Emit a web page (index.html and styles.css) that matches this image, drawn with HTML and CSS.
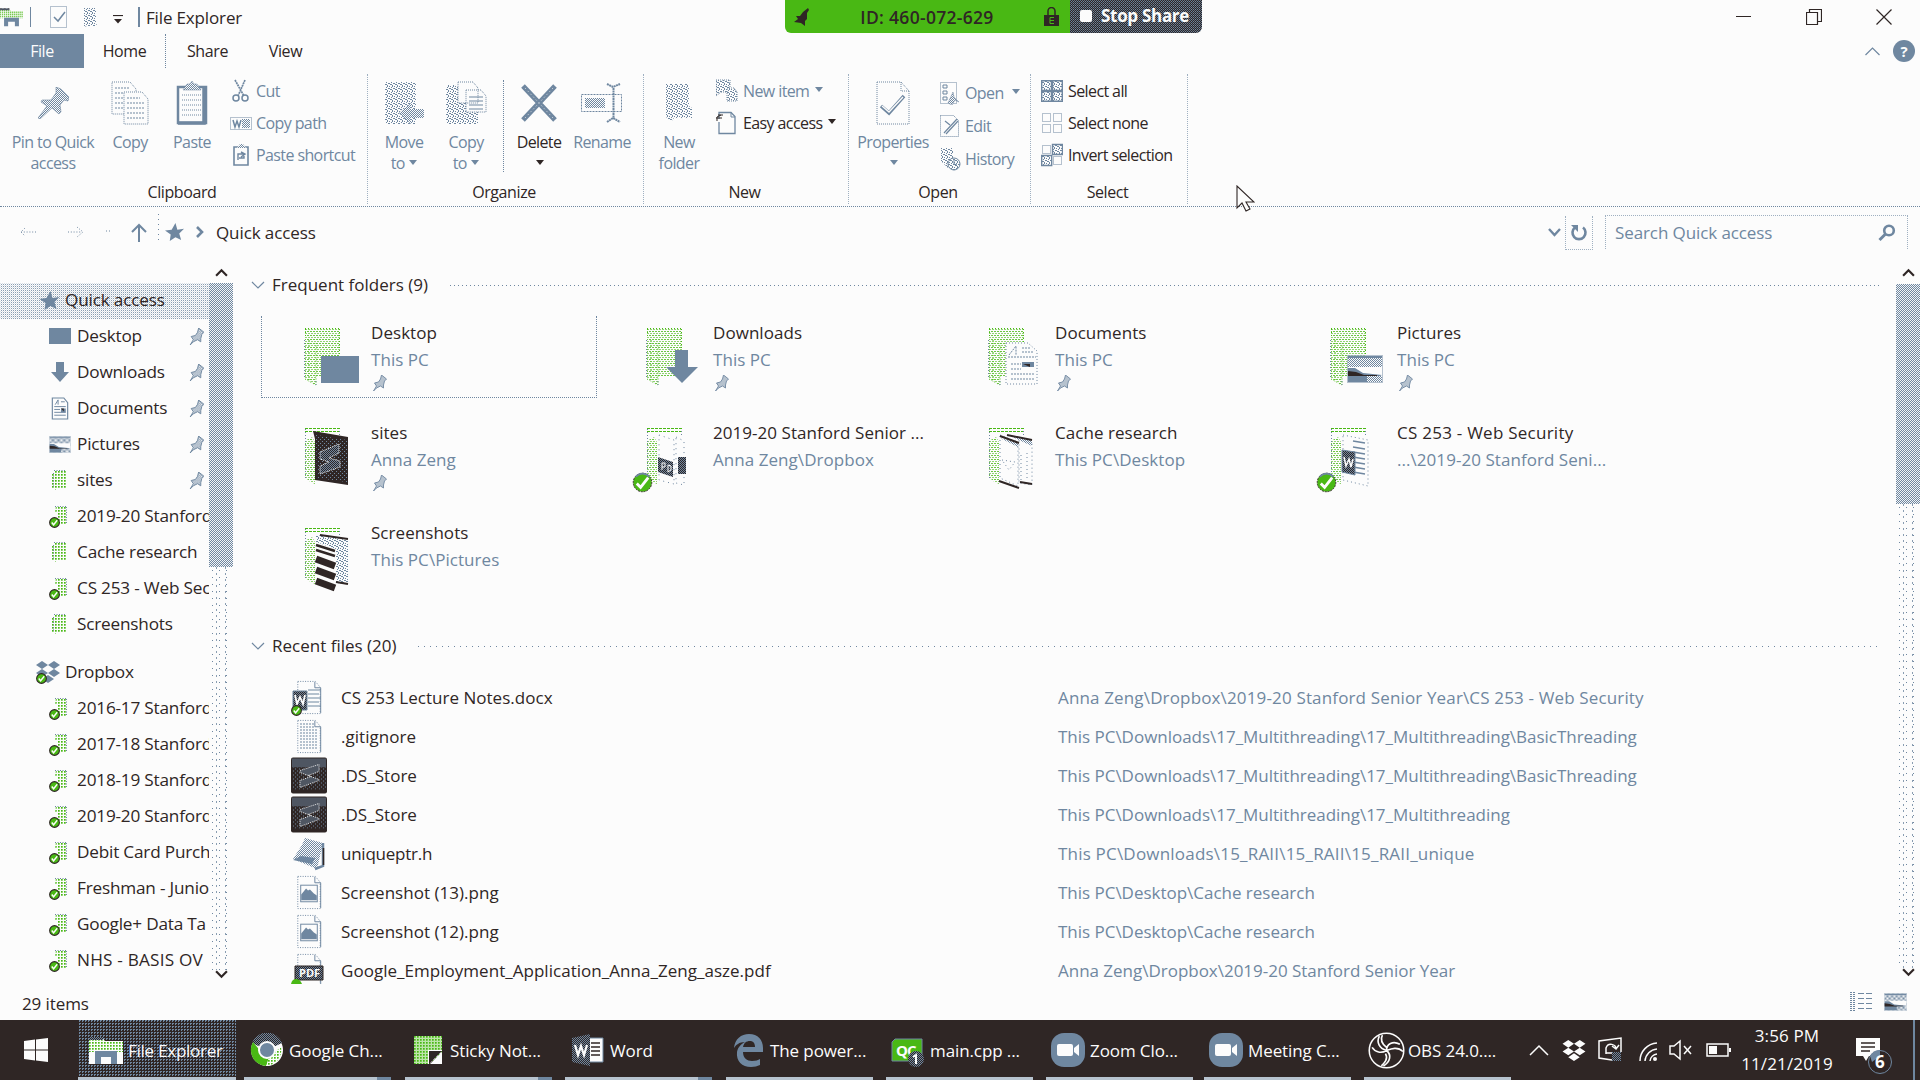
FILE: index.html
```html
<!DOCTYPE html>
<html lang="en">
<head>
<meta charset="utf-8">
<title>File Explorer</title>
<link rel="stylesheet" href="styles.css">
</head>
<body>
<svg class="defs" width="0" height="0" aria-hidden="true">
  <defs>
    <pattern id="green" width="3" height="3" patternUnits="userSpaceOnUse"><rect width="3" height="3" fill="#fcfcfc"/><rect width="1.7" height="1.7" fill="#49b814"/></pattern>
    <pattern id="gg" width="3" height="4" patternUnits="userSpaceOnUse"><rect width="3" height="4" fill="#fcfcfc"/><rect width="2" height="1" fill="#49b814" opacity=".8"/><rect x="1" y="2" width="2" height="1" fill="#49b814" opacity=".6"/></pattern>
    <pattern id="blue" width="2" height="2" patternUnits="userSpaceOnUse"><rect width="2" height="2" fill="#fcfcfc"/><rect width="1" height="1" fill="#6f87a0"/><rect x="1" y="1" width="1" height="1" fill="#6f87a0"/></pattern>
    <pattern id="soft" width="5" height="5" patternUnits="userSpaceOnUse"><rect width="5" height="5" fill="#fcfcfc"/><path d="M0 0h1v1H0zM2 1h1v1H2zM4 2h1v1H4zM1 3h1v1H1zM3 4h1v1H3zM3 0h1v1H3zM0 2h1v1H0zM2 3h1v1H2z" fill="#6f87a0"/></pattern>
    <pattern id="dark" width="4" height="4" patternUnits="userSpaceOnUse"><rect width="4" height="4" fill="#2f2625"/><rect width="1" height="1" fill="#6f87a0"/><rect x="2" y="2" width="1" height="1" fill="#6f87a0"/></pattern>
    <pattern id="slate" width="2" height="2" patternUnits="userSpaceOnUse"><rect width="2" height="2" fill="#2f2625"/><rect width="1" height="1" fill="#6f87a0"/><rect x="1" y="1" width="1" height="1" fill="#6f87a0"/></pattern>
  </defs>
  <symbol id="pin" viewBox="0 0 14 16"><path d="M9 0l5 4-2 2-1 4 0 3-3-2-4 2-3 3 3-5-2-3 4-1 2-3z" fill="url(#blue)" stroke="#6f87a0" stroke-width=".9"/></symbol>
  <symbol id="star" viewBox="0 0 20 20"><path d="M11 0l2 7 7-1-5 5 2 7-6-3-6 4 1-7-6-4 7-1z" fill="#6f87a0"/></symbol>
  <symbol id="badge" viewBox="0 0 12 12"><circle cx="6" cy="6" r="5.3" fill="#49b814" stroke="#2f2625" stroke-width="1.2"/><path d="M3 6l2 2.5 4-5" fill="none" stroke="#fcfcfc" stroke-width="1.5"/></symbol>
  <symbol id="fold" viewBox="0 0 22 26"><path d="M5 2h12v15h1v3H8l-2 2-1-2-2 0V6l2-1z" fill="url(#green)"/><path d="M5 2.5h12M4.5 5v15" stroke="#6f87a0" stroke-dasharray="1 1.5" fill="none"/></symbol>
  <symbol id="foldb" viewBox="0 0 22 26"><path d="M7 2h11v18H8V9H6z" fill="url(#green)"/><path d="M6 2.5h11M17.500 3v17" stroke="#6f87a0" stroke-dasharray="1 1.5" fill="none"/><use href="#badge" x="0" y="13" width="11" height="11"/></symbol>
  <symbol id="bigfold" viewBox="0 0 60 70"><path d="M4 5h35v49H15v8l-7-4-4-3V19z" fill="url(#gg)"/><path d="M4 5.500h35M38.500 6v47M4.500 6v9M8 17v40M4 20v36l11 6V20" fill="none" stroke="#49b814" stroke-dasharray="1 2"/><path d="M3.500 17v38M15 58v4" stroke="#6f87a0" stroke-dasharray="1 2"/></symbol>
  <symbol id="openfold" viewBox="0 0 60 70"><path d="M4 5.500h35M4 8.500h35" stroke="#49b814" stroke-dasharray="3 1"/><path d="M4 18l7-4 3 5v42l-6-3-4-4z" fill="url(#gg)"/><path d="M4.500 6v50M38.500 8v6" stroke="#6f87a0" stroke-dasharray="1 2"/></symbol>
  <symbol id="bigbadge" viewBox="0 0 22 22"><circle cx="11" cy="11" r="9.700" fill="#49b814" stroke="#2f2625" stroke-dasharray="2 1"/><path d="M4 5a9 9 0 0 1 14 0" fill="none" stroke="#6f87a0" stroke-width="2"/><path d="M5 12l4 4 8-10" fill="none" stroke="#fcfcfc" stroke-width="3"/></symbol>
  <symbol id="photo" viewBox="0 0 36 28"><rect x=".5" y=".5" width="35" height="27" fill="#fcfcfc" stroke="#6f87a0" stroke-dasharray="1 1"/><path d="M1 3h34v9H1z" fill="url(#blue)"/><path d="M1 2h34" stroke="#6f87a0" stroke-width="2"/><path d="M1 13h7l8 5 19 2-14 7H1z" fill="#6f87a0"/><path d="M1 16l8 1 8 3H30v1H1z" fill="#2f2625"/><path d="M20 21h15v6H20z" fill="url(#blue)"/></symbol>
  <symbol id="doc" viewBox="0 0 18 24"><path d="M1 1h12l4 5v17H1z" fill="#fcfcfc" stroke="#6f87a0" stroke-width="1.200"/><path d="M4 8l3-5v5M3 10h12M3 13h6M3 16h12M3 19h12M10 5h4" fill="none" stroke="#6f87a0"/><path d="M10 12h5v4h-5z" fill="#6f87a0"/><path d="M10 12h3v3z" fill="#2f2625"/></symbol>
  <symbol id="drop" viewBox="0 0 24 22"><path d="M6 0l6 4-6 4-6-4zM18 0l6 4-6 4-6-4zM6 8l6 4-6 4-6-4zM18 8l6 4-6 4-6-4zM12 14l6 4-6 4-6-4z"/></symbol>
  <symbol id="sheet" viewBox="0 0 36 40"><path d="M6.500 3.500h18l5 6v27h-23z" fill="#fcfcfc" stroke="#6f87a0" stroke-dasharray="1 1.500"/><path d="M24 4v6h6v26" fill="none" stroke="#6f87a0"/></symbol>
  <symbol id="image" viewBox="0 0 36 40"><use href="#sheet"/><rect x="9.500" y="12.500" width="17" height="17" fill="none" stroke="#6f87a0"/><path d="M10 27v-5l5-6 2 2 2-1 4 4 3 2v5H10z" fill="#6f87a0"/></symbol>
  <symbol id="subl" viewBox="0 0 36 38"><rect y="1" width="36" height="36" rx="2" fill="#2f2625"/><path d="M1 2h34v9H1z" fill="url(#slate)"/><path d="M1 11h34v22H1z" fill="url(#dark)"/><path d="M28 8v7l-11 4 11 4v1L9 31v-7l11-4-11-4v-2z" fill="url(#slate)" stroke="#fcfcfc" stroke-width=".9" stroke-dasharray="1 1"/></symbol>
  <symbol id="pages" viewBox="0 0 38 44"><path d="M1 1h18l6 7v25H1z" fill="#fcfcfc" stroke="#6f87a0" stroke-dasharray="1 1"/><path d="M4 7h15M4 12h15M4 17h10M4 22h10M4 27h10" stroke="#6f87a0" stroke-dasharray="2 1"/><path d="M13 11h18l6 7v25H13z" fill="#fcfcfc" stroke="#6f87a0" stroke-dasharray="1 1"/><path d="M16 17h13M16 22h18M16 27h18M16 32h18M16 37h18" stroke="#6f87a0" stroke-dasharray="2 1"/></symbol>
  <symbol id="zoom" viewBox="0 0 34 34"><rect width="34" height="34" rx="13" fill="#6f87a0"/><rect x="6" y="11" width="16" height="12" rx="2" fill="#fcfcfc"/><path d="M23 15l5-4v12l-5-4z" fill="#fcfcfc"/></symbol>
  <symbol id="explorer" viewBox="0 0 34 28"><path d="M0 2h13l3 3h18v23H0z" fill="#fcfcfc"/><path d="M0 2h13l3 3h18v11H0z" fill="url(#green)"/><path d="M6 28V15h22v13h-6v-7H12v7z" fill="#6f87a0"/><path d="M0 1h14v3H0z" fill="url(#slate)"/></symbol>
</svg>

<header class="titlebar">
  <svg class="ti-app" viewBox="0 0 34 28"><use href="#explorer"/></svg>
  <i class="bar a"></i>
  <svg class="ti-check" viewBox="0 0 18 22"><rect x=".5" y=".5" width="16" height="21" fill="none" stroke="#6f87a0" stroke-dasharray="1 1"/><path d="M4 11l4 4 7-9" fill="none" stroke="#6f87a0" stroke-width="1.500"/></svg>
  <svg class="ti-new" viewBox="0 0 13 19"><path d="M0 0h12v14l1 4H3l-3 1z" fill="url(#soft)"/></svg>
  <svg class="ti-caret" viewBox="0 0 10 9"><path d="M0 .5h10" stroke="#2f2625" stroke-width="1.200"/><path d="M1 4h8L5 8.500z" fill="#2f2625"/></svg>
  <i class="bar b"></i>
  <span class="app-name">File Explorer</span>
  <div class="winbtns">
    <svg width="16" height="16" viewBox="0 0 16 16"><path d="M0 7.500h15" stroke="#2f2625"/></svg>
    <svg width="16" height="16" viewBox="0 0 16 16"><path d="M.5 3.500h11v12H.5zM3.500 3V.5h12v12H12" fill="none" stroke="#2f2625" stroke-width="1.200"/></svg>
    <svg width="16" height="16" viewBox="0 0 16 16"><path d="M.5.5l15 15M15.500.5l-15 15" stroke="#2f2625" stroke-width="1.200"/></svg>
  </div>
</header>

<nav class="tabs">
  <span class="file">File</span><span class="home">Home</span><span class="share">Share</span><span class="view">View</span>
  <div class="tab-tools">
    <svg width="15" height="9" viewBox="0 0 15 9"><path d="M.5 8l7-7 7 7" fill="none" stroke="#6f87a0" stroke-width="1.200"/></svg>
    <b class="help">?</b>
  </div>
</nav>

<section class="ribbon">
  <div class="group g-clip">
    <div class="tools">
      <div class="big w106"><svg class="pin-big" viewBox="0 0 31 32"><path d="M18 0l5 2 8 8-1 4-4-1-4 5 1 7-2 2-7-6L2 32 0 31l9-12-6-4 1-2 9 0 5-7z" fill="url(#blue)" stroke="#6f87a0" stroke-width=".6"/></svg><span>Pin to Quick<br>access</span></div>
      <div class="big w48"><svg width="38" height="44"><use href="#pages"/></svg><span>Copy</span></div>
      <div class="big w76"><svg width="32" height="44" viewBox="0 0 32 44"><path d="M2 6h28v36H2z" fill="#fcfcfc" stroke="#6f87a0" stroke-width="2.500"/><path d="M28 7v35H2" fill="none" stroke="#6f87a0" stroke-width="3.500"/><path d="M7 9l4-6h3l2-3 2 3h3l4 6z" fill="url(#blue)" stroke="#6f87a0" stroke-width=".5"/><path d="M6 14h19M6 19h19M6 24h19M6 29h19M6 34h19" stroke="#6f87a0" stroke-dasharray="1 1"/></svg><span>Paste</span></div>
      <div class="small">
        <div><svg viewBox="0 0 22 24"><path d="M5 1l9 16M15 1L8 17" stroke="#6f87a0" stroke-width="1.700" stroke-dasharray="2 .6" fill="none"/><circle cx="6" cy="19" r="3" fill="none" stroke="#6f87a0" stroke-width="1.500"/><circle cx="15" cy="19" r="3" fill="none" stroke="#6f87a0" stroke-width="1.500"/></svg>Cut</div>
        <div><svg viewBox="0 0 22 24"><rect x=".5" y="6.500" width="21" height="12" fill="none" stroke="#6f87a0" stroke-dasharray="1 1"/><path d="M3 9l2 7 2-6 2 6 2-7" stroke="#6f87a0" fill="none" stroke-width="1.500"/><path d="M12 8h8v9h-8z" fill="url(#blue)"/></svg>Copy path</div>
        <div><svg viewBox="0 0 22 24"><path d="M4 4h14v18H4z" fill="none" stroke="#6f87a0" stroke-width="1.600"/><path d="M7 5l3-4h3l3 4z" fill="url(#blue)"/><path d="M8 17v-6h6v4H9m2-6l4 2-4 3" stroke="#6f87a0" fill="none" stroke-width="1.400"/></svg>Paste shortcut</div>
      </div>
    </div>
    <div class="label">Clipboard</div>
  </div>
  <div class="group g-org">
    <div class="tools">
      <div class="big w72"><svg width="40" height="44" viewBox="0 0 40 44"><path d="M1 1h31v42H1z" fill="url(#soft)"/><path d="M15 32l12-10v6h13v9H27v6z" fill="url(#blue)"/></svg><span>Move<br>to <i class="car"></i></span></div>
      <div class="big w52"><svg width="42" height="44" viewBox="0 0 42 44"><path d="M1 4h32v39H1z" fill="url(#soft)"/><path d="M13 1h15l5 6v15H13zM21 9h15l5 6v16H21z" fill="#fcfcfc" stroke="#6f87a0" stroke-dasharray="1 1"/><path d="M24 16h14M24 20h14M24 24h14M24 28h14" stroke="#6f87a0"/></svg><span>Copy<br>to <i class="car"></i></span></div>
      <i class="inner-sep"></i>
      <div class="big w70 on"><svg width="38" height="44" viewBox="0 0 38 44"><path d="M3 5l32 34M35 5L3 39" stroke="#6f87a0" stroke-width="5"/><path d="M5 7l28 30M33 7L5 37" stroke="#fcfcfc" stroke-width=".8" stroke-dasharray="1 3"/></svg><span>Delete<br><i class="car"></i></span></div>
      <div class="big w56"><svg width="44" height="44" viewBox="0 0 44 44"><rect x="1.500" y="13.500" width="40" height="17" fill="none" stroke="#6f87a0" stroke-dasharray="2 1"/><path d="M5 17h20v10H5z" fill="url(#blue)"/><path d="M33.500 7v31M27 3l6 3 7-3M27 41l6-4 7 4" fill="none" stroke="#6f87a0" stroke-width="2" stroke-dasharray="2 .5"/></svg><span>Rename</span></div>
    </div>
    <div class="label">Organize</div>
  </div>
  <div class="group g-new">
    <div class="tools">
      <div class="big w70"><svg width="30" height="44" viewBox="0 0 30 44"><path d="M2 3h23v22l3 2v10H10l-3 4-5-5z" fill="url(#soft)"/></svg><span>New<br>folder</span></div>
      <div class="small n">
        <div><svg viewBox="0 0 22 24"><path d="M0 1h14v12H5l-5 4z" fill="url(#soft)" stroke="#6f87a0" stroke-dasharray="1 1"/><path d="M11 9h7l3 4v9H11z" fill="url(#soft)" stroke="#6f87a0" stroke-dasharray="1 1"/></svg>New item <i class="car"></i></div>
        <div class="on"><svg viewBox="0 0 22 24"><path d="M3 8V1.500h12l4 4v17H3V11" fill="none" stroke="#6f87a0" stroke-width="1.300"/><path d="M15 1v5h4" fill="none" stroke="#6f87a0"/><path d="M0 7h6M1 10V6l4-2M2 4h5" stroke="#2f2625" fill="none"/></svg>Easy access <i class="car"></i></div>
      </div>
    </div>
    <div class="label">New</div>
  </div>
  <div class="group g-open">
    <div class="tools">
      <div class="big w88"><svg width="34" height="44" viewBox="0 0 34 44"><path d="M1 1h24l8 9v33H1z" fill="none" stroke="#6f87a0" stroke-dasharray="1 1"/><path d="M25 1v9h8" fill="none" stroke="#6f87a0" stroke-dasharray="1 1"/><path d="M5 25l8 7 15-17" fill="none" stroke="#6f87a0" stroke-width="3.500"/><path d="M6 25l7 6 14-15" fill="none" stroke="#fcfcfc" stroke-width="1.300"/></svg><span>Properties<br><i class="car"></i></span></div>
      <div class="small o">
        <div><svg viewBox="0 0 22 24"><rect x="1.500" y="1.500" width="16" height="21" fill="none" stroke="#6f87a0" stroke-dasharray="1 1"/><path d="M4 4h4v3H4zM4 10h4v3H4zM4 16h4v3H4z" fill="none" stroke="#6f87a0"/><path d="M9 22l5-11 1 5 5 5-4-2-3 5z" fill="url(#blue)" stroke="#6f87a0" stroke-width=".5"/></svg>Open <i class="car m8"></i></div>
        <div><svg viewBox="0 0 22 24"><path d="M1.500 1.500h13l5 5v16h-18z" fill="none" stroke="#6f87a0" stroke-dasharray="1 1"/><path d="M5 19L18 5M7 20L19 7M6 7l5 4" stroke="#6f87a0" stroke-width="1.200"/></svg>Edit</div>
        <div><svg viewBox="0 0 22 24"><path d="M2 1h12v20H9L2 14z" fill="url(#soft)"/><circle cx="15" cy="17" r="6" fill="url(#soft)" stroke="#6f87a0"/><path d="M15 13v4l3 1" stroke="#6f87a0" fill="none"/></svg>History</div>
      </div>
    </div>
    <div class="label">Open</div>
  </div>
  <div class="group g-sel">
    <div class="tools">
      <div class="small s on">
        <div><svg viewBox="0 0 22 24"><path d="M.7 1.700h20.600v20.600H.7z" fill="url(#soft)" stroke="#6f87a0" stroke-width="1.400"/><path d="M11 1v22M0 12h22" stroke="#6f87a0" stroke-width="2.500"/></svg>Select all</div>
        <div><svg viewBox="0 0 22 24"><path d="M1.500 2.500h8v8h-8zM12.500 2.500h8v8h-8zM1.500 13.500h8v8h-8zM12.500 13.500h8v8h-8z" fill="none" stroke="#6f87a0" stroke-dasharray="1 1"/></svg>Select none</div>
        <div><svg viewBox="0 0 22 24"><path d="M1.500 2.500h8v8h-8zM12.500 13.500h8v8h-8z" fill="none" stroke="#6f87a0" stroke-dasharray="1 1"/><path d="M11.500 1.500h10v10h-10zM.7 12.500h10v10H.7z" fill="url(#soft)" stroke="#6f87a0" stroke-width="1.400"/></svg>Invert selection</div>
      </div>
    </div>
    <div class="label">Select</div>
  </div>
</section>

<section class="address">
  <svg class="nav-arrows" viewBox="0 0 210 40"><path d="M21 20h15M25 16l-4 4 4 4M68 20h14M77 15l6 5-6 5" fill="none" stroke="#6f87a0" stroke-dasharray="1 1.800"/><path d="M106 19h4" stroke="#6f87a0" stroke-dasharray="1 2"/><path d="M139 30V13M132 20l7-7 7 7" fill="none" stroke="#6f87a0" stroke-width="2"/><path d="M158.500 2v30" stroke="#6f87a0" stroke-dasharray="1 4"/><use href="#star" x="165" y="11" width="19" height="19"/><path d="M197 15l5 5-5 5" fill="none" stroke="#6f87a0" stroke-width="2.600"/></svg>
  <span class="crumb">Quick access</span>
  <svg class="addr-caret" width="13" height="9" viewBox="0 0 13 9"><path d="M1 1l5.500 6L12 1" fill="none" stroke="#6f87a0" stroke-width="2.400"/></svg>
  <div class="refresh"><svg width="18" height="18" viewBox="0 0 18 18"><path d="M13 3.500A6.500 6.500 0 1 1 5 3.500" fill="none" stroke="#6f87a0" stroke-width="2.600"/><path d="M1 1h7v7z" fill="#6f87a0"/></svg></div>
  <div class="search"><span>Search Quick access</span><svg width="18" height="18" viewBox="0 0 18 18"><circle cx="11" cy="6.500" r="4.800" fill="none" stroke="#6f87a0" stroke-width="2.600"/><path d="M7.500 10L1.500 16" stroke="#6f87a0" stroke-width="3"/></svg></div>
</section>

<main class="body">
  <aside class="side">
    <div class="tree">
      <div class="row root sel"><svg class="ic"><use href="#star" x="3" y="3" width="21" height="20"/></svg><span>Quick access</span></div>
      <div class="row"><svg class="ic"><rect y="4" width="22" height="16" fill="#6f87a0"/></svg><span>Desktop</span><svg class="pin"><use href="#pin"/></svg></div>
      <div class="row"><svg class="ic"><path d="M7 2h8v10h5l-9 10-9-10h5z" fill="#6f87a0"/></svg><span>Downloads</span><svg class="pin"><use href="#pin"/></svg></div>
      <div class="row"><svg class="ic"><use href="#doc" x="2" y="1" width="18" height="23"/></svg><span>Documents</span><svg class="pin"><use href="#pin"/></svg></div>
      <div class="row"><svg class="ic"><use href="#photo" x="0" y="4" width="22" height="17"/></svg><span>Pictures</span><svg class="pin"><use href="#pin"/></svg></div>
      <div class="row"><svg class="ic"><use href="#fold"/></svg><span>sites</span><svg class="pin"><use href="#pin"/></svg></div>
      <div class="row"><svg class="ic"><use href="#foldb"/></svg><span>2019-20 Stanford</span></div>
      <div class="row"><svg class="ic"><use href="#fold"/></svg><span>Cache research</span></div>
      <div class="row"><svg class="ic"><use href="#foldb"/></svg><span>CS 253 - Web Sec</span></div>
      <div class="row"><svg class="ic"><use href="#fold"/></svg><span>Screenshots</span></div>
      <div class="row root gap"><svg class="ic" fill="#6f87a0"><use href="#drop" x="0" y="1" width="24" height="22"/><use href="#badge" x="0" y="13" width="11" height="11"/></svg><span>Dropbox</span></div>
      <div class="row"><svg class="ic"><use href="#foldb"/></svg><span>2016-17 Stanford</span></div>
      <div class="row"><svg class="ic"><use href="#foldb"/></svg><span>2017-18 Stanford</span></div>
      <div class="row"><svg class="ic"><use href="#foldb"/></svg><span>2018-19 Stanford</span></div>
      <div class="row"><svg class="ic"><use href="#foldb"/></svg><span>2019-20 Stanford</span></div>
      <div class="row"><svg class="ic"><use href="#foldb"/></svg><span>Debit Card Purch</span></div>
      <div class="row"><svg class="ic"><use href="#foldb"/></svg><span>Freshman - Junio</span></div>
      <div class="row"><svg class="ic"><use href="#foldb"/></svg><span>Google+ Data Ta</span></div>
      <div class="row"><svg class="ic"><use href="#foldb"/></svg><span class="sp">NHS - BASIS OV</span></div>
    </div>
    <div class="scroll left">
      <svg class="arr" viewBox="0 0 12 8"><path d="M1 7l5-5 5 5" fill="none" stroke="#2f2625" stroke-width="2"/></svg>
      <div class="thumb"></div><div class="track"></div>
      <svg class="arr" viewBox="0 0 12 8"><path d="M1 1l5 5 5-5" fill="none" stroke="#2f2625" stroke-width="2"/></svg>
    </div>
  </aside>

  <section class="content">
    <div class="head"><svg viewBox="0 0 14 9"><path d="M1 1l6 6 6-6" fill="none" stroke="#6f87a0" stroke-width="1.200"/></svg><h2>Frequent folders (9)</h2><i></i></div>
    <div class="tiles">
      <div class="tile picked"><svg class="art"><use href="#bigfold"/><path d="M21 33h38v27H21z" fill="#6f87a0"/></svg><p><b>Desktop</b><span>This PC</span><svg class="pin"><use href="#pin"/></svg></p></div>
      <div class="tile"><svg class="art"><use href="#bigfold"/><path d="M33 27h13v17h10L40 60 24 44h9z" fill="#6f87a0"/></svg><p><b>Downloads</b><span>This PC</span><svg class="pin"><use href="#pin"/></svg></p></div>
      <div class="tile"><svg class="art"><use href="#bigfold"/><path d="M22 20h22l9 8v33H22z" fill="#fcfcfc" stroke="#6f87a0" stroke-dasharray="1 2"/><path d="M25 32l7-9v9M24 34h28M27 41h10M27 46h10M27 51h24M27 56h24M38 25h8M38 29h12" fill="none" stroke="#6f87a0" stroke-dasharray="2 1"/><path d="M38 39h12v5H38z" fill="#6f87a0"/><path d="M39 41h7v3z" fill="#2f2625"/></svg><p><b>Documents</b><span>This PC</span><svg class="pin"><use href="#pin"/></svg></p></div>
      <div class="tile"><svg class="art"><use href="#bigfold"/><use href="#photo" x="21" y="32" width="36" height="28"/></svg><p><b>Pictures</b><span>This PC</span><svg class="pin"><use href="#pin"/></svg></p></div>
      <div class="tile"><svg class="art"><use href="#openfold"/><path d="M13 8l35 6v48L15 57V16z" fill="#2f2625"/><path d="M16 12l31 5v42l-30-4z" fill="url(#dark)"/><path d="M39 21v9l-10 5 11 3v6l-20 7v-8l9-4-9-3v-7z" fill="url(#slate)" stroke="#fcfcfc" stroke-dasharray="1 1"/></svg><p><b>sites</b><span>Anna Zeng</span><svg class="pin"><use href="#pin"/></svg></p></div>
      <div class="tile"><svg class="art"><use href="#openfold"/><path d="M17 12l15 5v44l-15-4zM34 14l8 4v44l-8-2z" fill="#fcfcfc" stroke="#6f87a0" stroke-dasharray="1 4"/><path d="M16 34l15 5v15l-15-5zM36 34h8v17h-8z" fill="url(#slate)"/><path d="M20 40v7M20 40h3v4h-3M26 42v7l3-2v-4z" fill="none" stroke="#fcfcfc"/></svg><svg class="bb"><use href="#bigbadge"/></svg><p><b>2019-20 Stanford Senior ...</b><span>Anna Zeng\Dropbox</span></p></div>
      <div class="tile"><svg class="art"><use href="#openfold"/><path d="M16 12l18 7v44l-18-8zM35 15l13 3v44l-13-2z" fill="#fcfcfc" stroke="#6f87a0" stroke-dasharray="1 3"/><path d="M16 15l18 5v4zM24 12l24 5v6z" fill="url(#blue)"/><path d="M16 13l19 7M23 12l25 5M15 58l20 7M36 59l12 2" stroke="#2f2625" stroke-width="2"/><path d="M18 37l13 2-6 8zM37 32v25M43 30v27" stroke="#6f87a0" stroke-dasharray="1 3" fill="none"/></svg><p><b>Cache research</b><span>This PC\Desktop</span></p></div>
      <div class="tile"><svg class="art"><use href="#openfold"/><path d="M17 12l25 5v46l-25-6z" fill="#fcfcfc" stroke="#6f87a0" stroke-dasharray="1 3"/><path d="M27 18l12 2M27 24l12 2M27 29l12 2M27 34l12 2M27 39l12 2M27 44l12 2M27 49l12 2" stroke="#6f87a0" stroke-width="1.500"/><path d="M16 27l13 2v23l-13-3z" fill="url(#slate)" stroke="#6f87a0"/><path d="M18 34l2 9 3-7 2 8 2-8" fill="none" stroke="#fcfcfc" stroke-width="1.500"/></svg><svg class="bb"><use href="#bigbadge"/></svg><p><b class="wide">CS 253 - Web Security</b><span>...\2019-20 Stanford Seni...</span></p></div>
      <div class="tile"><svg class="art"><use href="#openfold"/><path d="M16 12l32 5v44l-12-1-20 2z" fill="url(#soft)"/><path d="M16 19l20 7v40l-20-7z" fill="#fcfcfc"/><path d="M16 22l19 6M16 27l19 6" stroke="#2f2625" stroke-width="2.500"/><path d="M16 36l19 7M16 47l19 7M16 58l19 7" stroke="#2f2625" stroke-width="7"/><path d="M20 12l28 4M36 59l12 2" stroke="#2f2625" stroke-width="2"/></svg><p><b>Screenshots</b><span>This PC\Pictures</span></p></div>
    </div>
    <div class="head second"><svg viewBox="0 0 14 9"><path d="M1 1l6 6 6-6" fill="none" stroke="#6f87a0" stroke-width="1.200"/></svg><h2>Recent files (20)</h2><i></i></div>
    <div class="files">
      <div class="f"><svg><use href="#sheet"/><path d="M17 12h13M17 16h11M17 20h13M17 24h11M17 28h13" stroke="#6f87a0" stroke-width="1.200"/><path d="M2 13h14v19H2z" fill="url(#slate)" stroke="#6f87a0"/><path d="M4 17l2 9 3-7 3 7 2-9" fill="none" stroke="#fcfcfc" stroke-width="1.800"/><use href="#badge" y="27" width="11" height="11"/></svg><b>CS 253 Lecture Notes.docx</b><span class="wide">Anna Zeng\Dropbox\2019-20 Stanford Senior Year\CS 253 - Web Security</span></div>
      <div class="f"><svg><use href="#sheet"/><path d="M9 7h14M9 10h14M9 13h18M9 16h18M9 19h18M9 22h18M9 25h18M9 28h18M9 31h18" stroke="#6f87a0" stroke-dasharray="2 1"/></svg><b>.gitignore</b><span>This PC\Downloads\17_Multithreading\17_Multithreading\BasicThreading</span></div>
      <div class="f"><svg><use href="#subl"/></svg><b>.DS_Store</b><span>This PC\Downloads\17_Multithreading\17_Multithreading\BasicThreading</span></div>
      <div class="f"><svg><use href="#subl"/></svg><b>.DS_Store</b><span>This PC\Downloads\17_Multithreading\17_Multithreading</span></div>
      <div class="f"><svg><path d="M14 4l18 5-6 26L2 25l9-14z" fill="url(#blue)"/><path d="M2 26l8-4 14 2-3 6z" fill="#6f87a0"/><path d="M32 9v23l-8 3" fill="none" stroke="#6f87a0" stroke-width="2.500"/><path d="M32.500 14v17" stroke="#2f2625" stroke-width="1.500"/></svg><b class="tight">uniqueptr.h</b><span class="wider">This PC\Downloads\15_RAII\15_RAII\15_RAII_unique</span></div>
      <div class="f"><svg><use href="#image"/></svg><b>Screenshot (13).png</b><span>This PC\Desktop\Cache research</span></div>
      <div class="f"><svg><use href="#image"/></svg><b>Screenshot (12).png</b><span>This PC\Desktop\Cache research</span></div>
      <div class="f"><svg><use href="#sheet"/><path d="M4 15h28v14H4z" fill="url(#slate)" stroke="#2f2625"/><text class="pdf" x="8" y="26">PDF</text><path d="M0 33q1-5 5-5 4 0 6 5z" fill="#49b814"/></svg><b>Google_Employment_Application_Anna_Zeng_asze.pdf</b><span>Anna Zeng\Dropbox\2019-20 Stanford Senior Year</span></div>
    </div>
  </section>

  <div class="scroll right">
    <svg class="arr" viewBox="0 0 12 8"><path d="M1 7l5-5 5 5" fill="none" stroke="#2f2625" stroke-width="2"/></svg>
    <div class="thumb"></div><div class="track"></div>
    <svg class="arr" viewBox="0 0 12 8"><path d="M1 1l5 5 5-5" fill="none" stroke="#2f2625" stroke-width="2"/></svg>
  </div>
</main>

<footer class="status">
  <span>29 items</span>
  <svg width="58" height="24" viewBox="0 0 58 24"><path d="M1 2v20M4 2v20" stroke="#6f87a0" stroke-width="2" stroke-dasharray="1 1"/><path d="M8 3.500h14M8 8.500h14M8 13.500h14M8 18.500h14" stroke="#6f87a0" stroke-dasharray="6 2"/><use href="#photo" x="34" y="3" width="23" height="18"/></svg>
</footer>

<footer class="taskbar">
  <svg class="start" viewBox="0 0 24 24"><path d="M0 3l11-1.500v10H0zM12 1.400L24 0v11.500H12zM0 12.500h11v10L0 21zM12 12.500h12V24l-12-1.500z" fill="#fcfcfc"/></svg>
  <div class="task t1 active"><svg viewBox="0 0 34 34"><use href="#explorer" y="3" width="34" height="28"/></svg><span>File Explorer</span></div>
  <div class="task t2 multi"><svg viewBox="0 0 34 34"><circle cx="17" cy="17" r="16" fill="#fcfcfc"/><path d="M17 17L2 10A16 16 0 0 1 32 10z" fill="url(#slate)"/><path d="M3 9l9 11 8 5-4 8A16 16 0 0 1 3 9z" fill="#49b814"/><path d="M19 24l12-10a16 16 0 0 1-15 19z" fill="url(#green)"/><circle cx="17" cy="17" r="8" fill="#6f87a0" stroke="#fcfcfc" stroke-width="2"/></svg><span>Google Ch...</span></div>
  <div class="task t3 multi"><svg viewBox="0 0 34 34"><path d="M3 3h28v17L18 31H3z" fill="url(#green)"/><path d="M3 3h28v14H17v14H3z" fill="#49b814" opacity=".35"/><path d="M18 18h13L18 31z" fill="#2f2625"/><path d="M31 19v12H19z" fill="#fcfcfc"/></svg><span>Sticky Not...</span></div>
  <div class="task t4 multi"><svg viewBox="0 0 34 34"><path d="M17 5h15v24H17z" fill="#fcfcfc" stroke="#6f87a0"/><path d="M20 10h9M20 14h9M20 18h9M20 22h9" stroke="#2f2625" stroke-width="1.500"/><path d="M1 5l18-4v32L1 29z" fill="url(#slate)"/><path d="M4 12l3 10 3-9 3 9 3-10" fill="none" stroke="#fcfcfc" stroke-width="2.200"/></svg><span>Word</span></div>
  <div class="task t5"><svg viewBox="0 0 34 34"><path d="M3 15C4 6 10 1 18 1c9 0 14 6 14 14v4H12c0 6 4 9 9 9 4 0 6-1 8-2v6c-3 1-5 2-9 2C11 34 5 28 6 19c1-5 4-8 8-10-6 0-9 3-11 6zm9-1h12c0-4-2-6-5-6-4 0-6 2-7 6z" fill="#6f87a0"/></svg><span>The power...</span></div>
  <div class="task t6"><svg viewBox="0 0 34 34"><path d="M1 9l3-3h27v22H1z" fill="#49b814" stroke="#6f87a0"/><text class="qc" x="5" y="23">QC</text><circle cx="25" cy="26" r="8" fill="url(#slate)"/><path d="M22 24l3-2v9" fill="none" stroke="#fcfcfc" stroke-width="2"/></svg><span>main.cpp ...</span></div>
  <div class="task t7"><svg><use href="#zoom"/></svg><span>Zoom Clo...</span></div>
  <div class="task t8"><svg><use href="#zoom"/></svg><span>Meeting C...</span></div>
  <div class="task t9"><svg viewBox="0 0 36 36"><circle cx="18" cy="18" r="16.800" fill="none" stroke="#fcfcfc" stroke-width="1.500"/><path d="M11 4c-3 6 0 12 7 14M18 18c0-6 6-10 13-6M14 3c-2 4-1 8 4 12M34 19c-5-5-11-3-16-1M18 18c5 4 4 11-3 15M18 18c-5 3-11 2-14-3M17 21c3 5-1 9-4 12" fill="none" stroke="#fcfcfc" stroke-width="1.600"/></svg><span>OBS 24.0....</span></div>
  <svg class="tray" viewBox="0 0 210 40"><path d="M2 25l9-9 9 9" fill="none" stroke="#fcfcfc" stroke-width="1.500"/><use href="#drop" x="34" y="10" width="24" height="21" fill="#fcfcfc"/><path d="M84 30l-13-2V11l22-3v14M88 19c0-5-8-7-10-1v6m0-1h6M84 16l4 3 3-4" fill="none" stroke="#fcfcfc" stroke-width="1.500"/><path d="M84 22h9v9h-9z" fill="url(#slate)"/><path d="M112 31a18 18 0 0 1 17-18M117 31a13 13 0 0 1 12-12M122 31a8 8 0 0 1 7-7" fill="none" stroke="#fcfcfc" stroke-width="1.500"/><circle cx="127" cy="29" r="2" fill="#fcfcfc"/><path d="M142 16h4l6-5v18l-6-5h-4zM156 16l7 8M163 16l-7 8" fill="none" stroke="#fcfcfc" stroke-width="1.500"/><rect x="179" y="14" width="21" height="12" fill="none" stroke="#fcfcfc" stroke-width="1.500"/><path d="M181 16h8v8h-8zM201 18h2v4h-2z" fill="#fcfcfc"/></svg>
  <div class="clock">3:56 PM<br>11/21/2019</div>
  <svg class="notif" viewBox="0 0 38 38"><path d="M0 0h24v18H13l-3 5-3-5H0z" fill="#fcfcfc"/><path d="M5 5h14M5 9h14M5 13h9" stroke="#2f2625" stroke-width="1.300"/><circle cx="24" cy="24" r="11.500" fill="#2f2625" stroke="#6f87a0"/><path d="M14 18a12 12 0 0 1 10-6v6l-8 6z" fill="#6f87a0"/><text x="19" y="30">6</text></svg>
</footer>

<div class="share-bar">
  <div class="green"><svg width="16" height="18" viewBox="0 0 16 18"><path d="M14 0l1 2-2 3v6l-2 2v5l-4-3-7-1 4-3-2-3 4 0 3-4z" fill="#2f2625"/></svg><b>ID: 460-072-629</b><svg width="15" height="19" viewBox="0 0 15 19"><path d="M4 9V4a3.500 3.500 0 0 1 7 0v5" fill="none" stroke="#2f2625" stroke-width="1.500"/><path d="M0 8h15v11H0z" fill="#2f2625"/><path d="M10 10.500H6v6h4M6 13.500h4" fill="none" stroke="#49b814"/></svg></div>
  <div class="stop"><i></i><b>Stop Share</b></div>
</div>
<svg class="cursor" viewBox="0 0 19 28"><path d="M1 1v22l5-5 4 8 4-2-4-7h8z" fill="#fcfcfc" stroke="#2f2625" stroke-width="1.100"/></svg>
</body>
</html>
```
FILE: styles.css
```css
* { box-sizing: border-box; }
body { margin: 0; width: 1920px; height: 1080px; overflow: hidden; background: #fcfcfc; color: #2f2625; font: 17px/24px "Open Sans", "Noto Sans", sans-serif; letter-spacing: -0.1px; display: flex; flex-direction: column; }
svg { display: block; flex: none; }
.defs { position: absolute; }
b, h2 { font-weight: 400; margin: 0; }
i { flex: none; }

.titlebar { height: 34px; display: flex; align-items: center; flex: none; }
.ti-app { width: 23px; height: 20px; }
.bar { width: 1px; height: 20px; background: #6f87a0; }
.bar.a { margin-left: 7px; }
.bar.b { margin-left: 15px; width: 2px; }
.ti-check { width: 18px; height: 22px; margin-left: 19px; }
.ti-new { width: 13px; height: 19px; margin-left: 16px; }
.ti-caret { width: 10px; height: 9px; margin-left: 16px; margin-top: 5px; }
.app-name { margin-left: 6px; margin-top: 2px; letter-spacing: -0.15px; }
.winbtns { margin-left: auto; margin-right: 28px; display: flex; gap: 54px; }

.tabs { height: 34px; flex: none; display: flex; line-height: 35px; font-size: 16px; letter-spacing: -0.4px; }
.tabs .file { width: 84px; background: #6f87a0; color: #fcfcfc; text-align: center; }
.tabs .home { width: 82px; text-align: center; border-right: 1px dotted #6f87a0; }
.tabs .share { width: 83px; text-align: center; }
.tabs .view { width: 73px; text-align: center; }
.tab-tools { margin-left: auto; margin-right: 5px; display: flex; align-items: center; gap: 13px; }
.help { width: 22px; height: 22px; border-radius: 50%; background: #6f87a0; color: #fcfcfc; font-weight: 700; font-size: 15px; line-height: 22px; text-align: center; }

.ribbon { height: 139px; flex: none; display: flex; border-bottom: 1px dotted #6f87a0; color: #6f87a0; font-size: 16px; letter-spacing: -0.6px; }
.group { display: flex; flex-direction: column; margin: 6px 0 2px; border-right: 1px dotted #9fb0c1; flex: none; }
.g-clip { width: 368px; } .g-org { width: 276px; } .g-new { width: 205px; } .g-open { width: 182px; } .g-sel { width: 157px; }
.tools { height: 106px; flex: none; display: flex; }
.label { color: #2f2625; text-align: center; line-height: 24px; padding-right: 3px; letter-spacing: -0.4px; }
.big { display: flex; flex-direction: column; align-items: center; padding-top: 7px; text-align: center; white-space: nowrap; flex: none; }
.big > span { margin-top: 7px; line-height: 21px; }
.pin-big { width: 31px; height: 32px; margin: 6px 0; }
.w106 { width: 106px; } .w48 { width: 48px; } .w76 { width: 76px; } .w72 { width: 72px; } .w52 { width: 52px; } .w70 { width: 70px; } .w56 { width: 56px; } .w88 { width: 88px; }
.inner-sep { width: 1px; height: 92px; margin: 6px 0 0 11px; border-left: 1px dotted #6f87a0; }
.small { display: flex; flex-direction: column; padding-top: 1px; }
.small > div { height: 32px; display: flex; align-items: center; white-space: nowrap; }
.small svg { width: 22px; height: 24px; margin-right: 4px; }
.small.n { margin-left: 2px; } .small.n svg { margin-right: 5px; }
.small.o { margin-left: 2px; padding-top: 2px; } .small.o > div { height: 33px; } .small.o svg { margin-right: 4px; }
.small.s { margin-left: 10px; } .small.s svg { margin-right: 5px; }
.on { color: #2f2625; }
.car { display: inline-block; border: 4px solid transparent; border-top: 5px solid currentColor; border-bottom: 0; vertical-align: 4px; margin-left: 1px; }
.small .car { margin-left: 6px; margin-top: -3px; }
.small .m8 { margin-left: 8px; }

.address { height: 56px; flex: none; display: flex; align-items: flex-start; padding-top: 5px; }
.nav-arrows { width: 210px; height: 40px; }
.crumb { margin: 9px 0 0 6px; flex: 1; }
.addr-caret { margin: 16px 4px 0 0; }
.refresh { width: 28px; height: 34px; margin-top: 4px; border: 1px dotted #9fb0c1; border-top: 0; display: flex; align-items: center; justify-content: center; }
.search { width: 303px; height: 34px; margin: 3px 12px 0 12px; padding: 0 11px 0 9px; border: 1px dotted #9fb0c1; border-bottom: 0; display: flex; align-items: center; justify-content: space-between; color: #6f87a0; }

.body { height: 721px; flex: none; display: flex; }
.side { width: 234px; display: flex; }
.tree { width: 209px; padding-top: 20px; overflow: hidden; }
.row { height: 36px; padding-left: 49px; display: flex; align-items: center; white-space: nowrap; }
.row span { overflow: hidden; flex: 1; font-size: 17.2px; letter-spacing: -0.2px; margin-top: -2px; }
.row .sp { letter-spacing: 0.2px; }
.row .ic { width: 22px; height: 26px; margin-right: 6px; overflow: visible; }
.row .pin { width: 15px; height: 17px; margin-right: 5px; margin-top: -2px; }
.row.root { padding-left: 37px; }
.row.root .ic { width: 24px; margin-right: 4px; margin-left: -1px; }
.row.root span { margin-left: 1px; }
.row.gap { margin-top: 12px; }
.sel { background: conic-gradient(#fcfcfc 25%, #8a9eb2 0 50%, #fcfcfc 0 75%, #dbe1e7 0) 0 0 / 2px 2px; }
.scroll { display: flex; flex-direction: column; align-items: center; width: 24px; }
.scroll .arr { width: 13px; height: 9px; }
.scroll .thumb { width: 24px; flex: none; background: conic-gradient(#6f87a0 25%, #f2f4f6 0 50%, #6f87a0 0 75%, #f2f4f6 0) 0 0 / 2px 2px; }
.scroll .track { width: 24px; flex: 1; background: radial-gradient(circle, #6f87a0 .5px, transparent .8px) 0 0 / 7px 7px, radial-gradient(circle, #8a9eb2 .5px, transparent .8px) 3px 4px / 9px 6px; }
.left { padding: 5px 0 5px; }
.left .thumb { height: 284px; margin-top: 6px; }
.right { padding: 5px 0 7px; margin-left: auto; }
.right .thumb { height: 220px; margin-top: 7px; }

.content { width: 1646px; padding-left: 17px; overflow: hidden; letter-spacing: 0; }
.head { height: 24px; margin-top: 10px; display: flex; align-items: center; }
.head svg { width: 14px; height: 9px; }
.head h2 { font-size: 17px; margin-left: 7px; white-space: nowrap; }
.head i { flex: 1; margin-left: 22px; height: 1px; background: repeating-linear-gradient(90deg, #6f87a0 0 1px, transparent 1px 4px); }
.tiles { margin: 19px 0 0 10px; display: grid; grid-template-columns: repeat(4, 342px); grid-auto-rows: 100px; }
.tile { width: 336px; height: 82px; display: flex; position: relative; padding: 7px 0 0 39px; }
.picked { border: 1px dotted #6f87a0; border-top: 0; padding-left: 38px; }
.art { width: 62px; height: 70px; margin-right: 9px; overflow: visible; }
.bb { position: absolute; left: 29px; top: 56px; width: 21px; height: 21px; }
.tile p { margin: -4px 0 0; display: flex; flex-direction: column; white-space: nowrap; letter-spacing: 0.05px; }
.tile p b { line-height: 27px; }
.tile p span { line-height: 27px; color: #6f87a0; }
.tile .pin { width: 15px; height: 16px; margin-top: 2px; margin-left: 1px; }
.second { margin-top: 18px; }
.second i { background: repeating-linear-gradient(90deg, #6f87a0 0 1px, transparent 1px 6px); }
.files { margin: 20px 0 0 40px; }
.f { height: 39px; display: grid; grid-template-columns: 36px 717px auto; align-items: center; white-space: nowrap; }
.f svg { width: 36px; height: 39px; }
.f b { padding-left: 14px; letter-spacing: 0.03px; }
.f span { color: #6f87a0; padding-left: 14px; letter-spacing: -0.02px; }
.f .wide { letter-spacing: 0.15px; }
.f .wider { letter-spacing: 0.2px; }
.f .tight { letter-spacing: -0.25px; }
.tile .wide { letter-spacing: 0.25px; }
.pdf { font: 700 11px "Open Sans", sans-serif; fill: #fcfcfc; letter-spacing: 0; }

.status { height: 36px; flex: none; display: flex; justify-content: space-between; align-items: center; padding: 0 12px 0 22px; }
.status span { margin-top: 3px; }

.taskbar { height: 60px; flex: none; display: flex; background: #2f2625; color: #fcfcfc; }
.start { width: 24px; height: 24px; margin: 18px 30px 0 24px; }
.task { height: 60px; display: flex; align-items: center; white-space: nowrap; width: 147px; padding-left: 5px; margin-right: 13px; border-bottom: 3px solid #b7c3cf; padding-top: 3px; flex: none; }
.task svg { width: 34px; height: 34px; margin-right: 5px; }
.task span { margin-top: 2px; }
.t1 { width: 158px; margin-right: 8px; padding-left: 11px; letter-spacing: -0.25px; background: conic-gradient(#6f87a0 25%, #2f2625 0) 0 0 / 3px 3px; }
.multi { border-image: linear-gradient(90deg, #b7c3cf 90%, #6f87a0 90%) 1; border-style: solid; border-width: 0 0 3px; padding-left: 6px; }
.t2 { margin-right: 14px; } .t3 { margin-right: 13px; } .t4 { margin-right: 14px; }
.t7 { margin-right: 11px; }
.t9 { padding-left: 4px; margin-right: 17px; } .t9 svg { width: 37px; height: 37px; margin-right: 3px; }
.qc { font: 700 15px "Open Sans", sans-serif; fill: #fcfcfc; letter-spacing: -1px; }
.tray { width: 210px; height: 40px; margin-top: 10px; }
.clock { width: 120px; margin-left: -11px; padding-top: 2px; line-height: 28px; text-align: center; letter-spacing: 0.15px; }
.notif { width: 38px; height: 38px; margin: 18px 0 0 9px; overflow: visible; }
.notif text { font: 700 17px "Open Sans", sans-serif; fill: #fcfcfc; }
.taskbar::after { content: ""; margin-left: auto; margin-right: 5px; width: 2px; background: #6f87a0; }

.share-bar { position: absolute; left: 785px; top: 0; width: 417px; height: 33px; display: flex; border-radius: 0 0 6px 6px; overflow: hidden; }
.green { width: 285px; background: #49b814; display: flex; align-items: center; justify-content: space-between; padding: 0 11px 0 9px; }
.green b, .stop b { font-weight: 600; font-size: 17.5px; letter-spacing: 0.3px; }
.stop { flex: 1; display: flex; align-items: center; color: #fcfcfc; background: conic-gradient(#2f2625 25%, #6f87a0 0 50%, #2f2625 0 75%, #5a6c80 0) 0 0 / 2px 2px; padding: 0 0 2px 10px; }
.stop b { font-weight: 700; font-size: 17px; letter-spacing: -0.3px; }
.stop i { width: 12px; height: 12px; border-radius: 2px; background: #fcfcfc; margin-right: 9px; }
.cursor { position: absolute; left: 1236px; top: 185px; width: 19px; height: 28px; }
```
